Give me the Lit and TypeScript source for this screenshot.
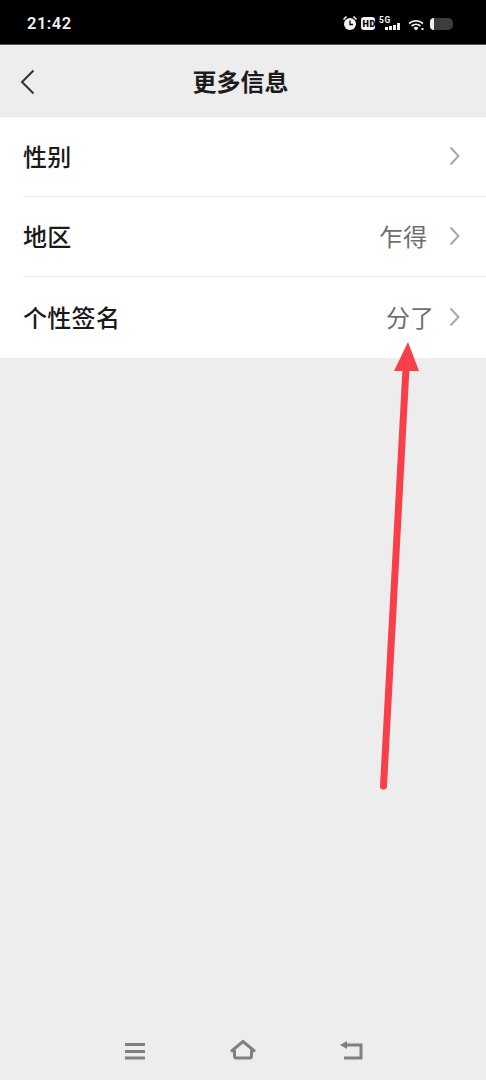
import { LitElement, html, css, svg } from "lit";
import { customElement } from "lit/decorators.js";

const chevron = html`<svg class="chev" viewBox="0 0 12 20" width="12" height="20"><path d="M1.5 1.5 L9.5 10 L1.5 18.5" fill="none" stroke="#aaaaaa" stroke-width="2"/></svg>`;

@customElement("app-root")
export class AppRoot extends LitElement {
  static styles = css`
    :host { display: block; width: 486px; height: 1080px; position: relative; background: #ededed; overflow: hidden;
      font-family: "Inter", "Noto Sans CJK SC", "Liberation Sans", sans-serif; }
    .page { display: flex; flex-direction: column; height: 1080px; }
    .status { height: 45px; background: #000; display: flex; align-items: center; justify-content: space-between; padding: 2px 0 0 27px; box-sizing: border-box; color: #f2f2f2; font: 600 16.5px "Roboto", "Inter", sans-serif; letter-spacing: .5px; border-bottom: 1px solid #555; }
    .status-icons { display: block; }
    .nav { height: 72px; box-sizing: border-box; display: flex; align-items: center; justify-content: center; position: relative; border-bottom: 1px solid #e6e6e6; }
    .nav h1 { margin: 0; font: 700 24px "Noto Sans CJK SC", sans-serif; color: #1c1c1c; transform: translateX(-2.5px); }
    .back { position: absolute; left: 20px; top: 24px; }
    .list { background: #fff; display: flex; flex-direction: column; }
    .row { height: 79px; display: flex; align-items: center; margin-left: 23px; border-bottom: 1px solid #ececec; padding-right: 25px; }
    .row:last-child { border-bottom: none; height: 81px; }
    .label { flex: 1; font: 500 24px "Noto Sans CJK SC", sans-serif; color: #1a1a1a; letter-spacing: .3px; padding-bottom: 2px; }
    .value { font: 400 24px "Noto Sans CJK SC", sans-serif; color: #6f6f6f; margin-right: 22px; padding-bottom: 2px; }
    .value.wide { margin-right: 15px; }
    .chev { margin-bottom: 1px; }
    .spacer { flex: 1; }
    .navbar { height: 80px; display: flex; }
    .navbar svg { display: block; }
    .overlay { position: absolute; left: 0; top: 0; pointer-events: none; }
  `;

  render() {
    return html`
      <div class="page">
        <div class="status">
          <span>21:42</span>
          <svg class="status-icons" width="160" height="44" viewBox="0 0 160 44">
            <circle cx="24" cy="23" r="6" fill="#f2f2f2"/>
            <path d="M24 19.5V23.5H27" fill="none" stroke="#000" stroke-width="1.3"/>
            <path d="M17.5 18.5l3-3M30.5 18.5l-3-3" stroke="#f2f2f2" stroke-width="1.6"/>
            <rect x="35" y="16" width="14" height="13" rx="3" fill="#f2f2f2"/>
            <text x="36.6" y="26.4" font-family="Roboto, sans-serif" font-size="9" font-weight="900" fill="#000">HD</text>
            <text x="53" y="21.5" font-family="Roboto, sans-serif" font-size="8.5" font-weight="700" fill="#f2f2f2">5G</text>
            <rect x="59" y="26" width="3" height="3" fill="#f2f2f2"/>
            <rect x="63" y="25" width="3" height="4" fill="#f2f2f2"/>
            <rect x="67" y="24" width="3" height="5" fill="#f2f2f2"/>
            <rect x="71" y="22" width="3" height="7" fill="#f2f2f2"/>
            <path d="M83 22.5a10.5 10.5 0 0 1 14 0M85.5 25a7 7 0 0 1 9 0" fill="none" stroke="#f2f2f2" stroke-width="1.7"/>
            <path d="M87.5 27a3.6 3.6 0 0 1 5 0L90 29.5z" fill="#f2f2f2"/>
            <rect x="95.5" y="27" width="2" height="2" fill="#f2f2f2"/>
            <rect x="104" y="17" width="23" height="12" rx="5" fill="#3c3c3c"/>
            <path d="M108 17h0v12h0a4 4 0 0 1 -4 -4v-4a4 4 0 0 1 4 -4z" fill="#f2f2f2"/>
          </svg>
        </div>
        <div class="nav">
          <svg class="back" width="16" height="26" viewBox="0 0 16 26"><path d="M13.5 1.5 L2 13 L13.5 24.5" fill="none" stroke="#333" stroke-width="2"/></svg>
          <h1>更多信息</h1>
        </div>
        <div class="list">
          <div class="row"><span class="label">性别</span>${chevron}</div>
          <div class="row"><span class="label">地区</span><span class="value">乍得</span>${chevron}</div>
          <div class="row"><span class="label">个性签名</span><span class="value wide">分了</span>${chevron}</div>
        </div>
        <div class="spacer"></div>
        <div class="navbar">
          <svg width="486" height="80" viewBox="0 0 486 80">
            <g fill="none" stroke="#808080" stroke-width="3">
              <path d="M125 44.5H145M125 51.5H145M125 58H145"/>
              <path d="M231 51.5L243 41.5L255 51.5"/>
              <path d="M234.5 50V56Q234.5 58 236.5 58H249.5Q251.5 58 251.5 56V50"/>
              <path d="M343 45H361V58H344"/>
            </g>
            <path d="M340 45L347 41V49Z" fill="#808080"/>
          </svg>
        </div>
      </div>
      <svg class="overlay" width="486" height="1080" viewBox="0 0 486 1080">
        ${svg`<path d="M383.5 786 L406 368" stroke="#f9404a" stroke-width="7" stroke-linecap="round" fill="none"/>
        <path d="M408 342 L419 371 L394 371 Z" fill="#f9404a"/>`}
      </svg>
    `;
  }
}
